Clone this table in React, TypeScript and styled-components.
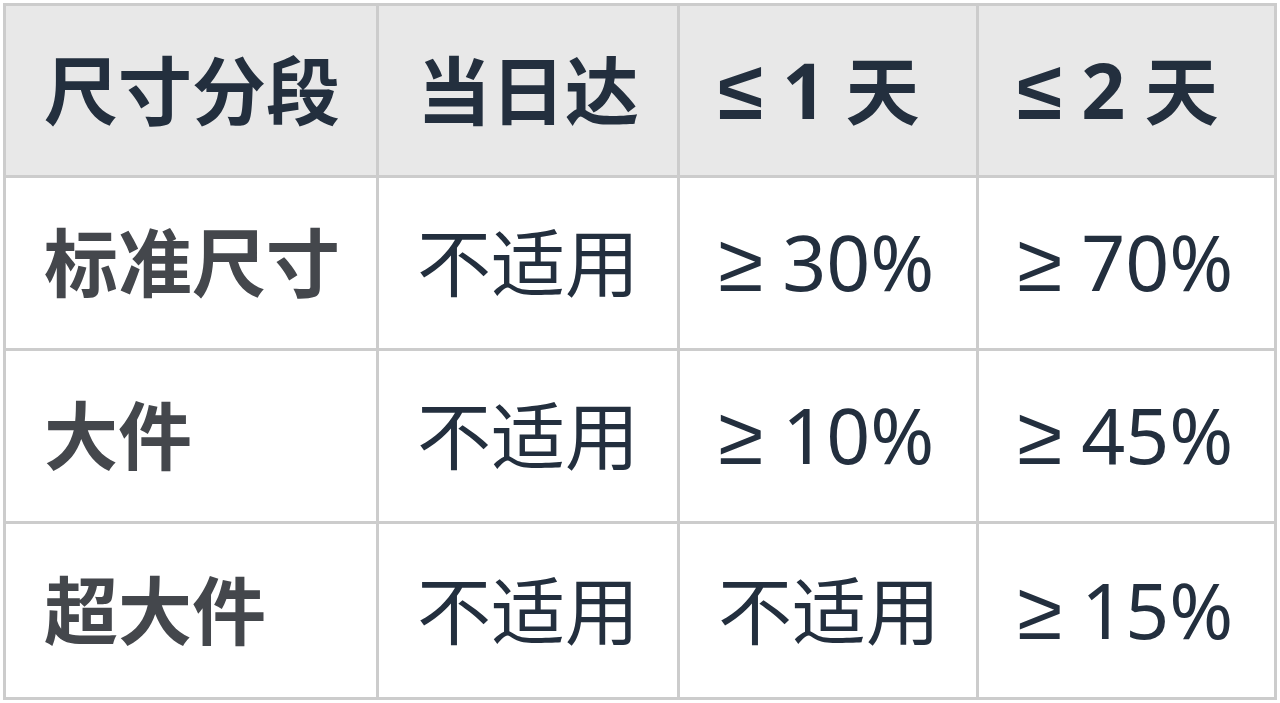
import styled, { createGlobalStyle } from "styled-components";

const GlobalStyle = createGlobalStyle`
  html, body {
    margin: 0;
    padding: 0;
    background: #ffffff;
  }
  body {
    font-family: "Noto Sans", "Noto Sans CJK SC", sans-serif;
  }
`;

const Page = styled.div`
  padding: 3px;
  width: 1280px;
  height: 703px;
  box-sizing: border-box;
`;

const Table = styled.div`
  display: grid;
  grid-template-columns: 370px 298px 296px 295px;
  grid-template-rows: 169px 170px 170px 173px;
  gap: 3px;
  padding: 3px;
  background: #cccccc;
  width: fit-content;
`;

const Cell = styled.div<{ $head?: boolean; $label?: boolean }>`
  display: flex;
  align-items: center;
  padding-left: 38px;
  background: ${(p) => (p.$head ? "#e8e8e8" : "#ffffff")};
  color: ${(p) => (p.$label ? "#44474c" : "#232f3e")};
  font-family: "Noto Sans", "Noto Sans CJK SC", sans-serif;
  font-size: 74px;
  font-weight: ${(p) => (p.$head || p.$label ? 700 : 400)};
  line-height: 1;
`;

const Text = styled.span`
  white-space: pre;
`;

const Sym = styled.span`
  font-family: "Liberation Sans", sans-serif;
  font-size: 82px;
`;

const Latin = styled.span`
  font-family: "Noto Sans", sans-serif;
  font-size: 77px;
`;

const header = ["尺寸分段", "当日达", "≤ 1 天", "≤ 2 天"];

const rows = [
  ["标准尺寸", "不适用", "≥ 30%", "≥ 70%"],
  ["大件", "不适用", "≥ 10%", "≥ 45%"],
  ["超大件", "不适用", "不适用", "≥ 15%"],
];

// split a cell text so symbols and digits get their own fonts
const renderText = (text: string) =>
  text.split(/([≤≥]|[0-9%]+)/).map((part, i) => {
    if (part === "≤" || part === "≥") return <Sym key={i}>{part}</Sym>;
    if (/^[0-9%]+$/.test(part)) return <Latin key={i}>{part}</Latin>;
    return part;
  });

export default function App() {
  return (
    <Page>
      <GlobalStyle />
      <Table>
        {header.map((h) => (
          <Cell key={h} $head>
            <Text>{renderText(h)}</Text>
          </Cell>
        ))}
        {rows.map((row) =>
          row.map((value, i) => (
            <Cell key={row[0] + i} $label={i === 0}>
              <Text>{renderText(value)}</Text>
            </Cell>
          ))
        )}
      </Table>
    </Page>
  );
}
